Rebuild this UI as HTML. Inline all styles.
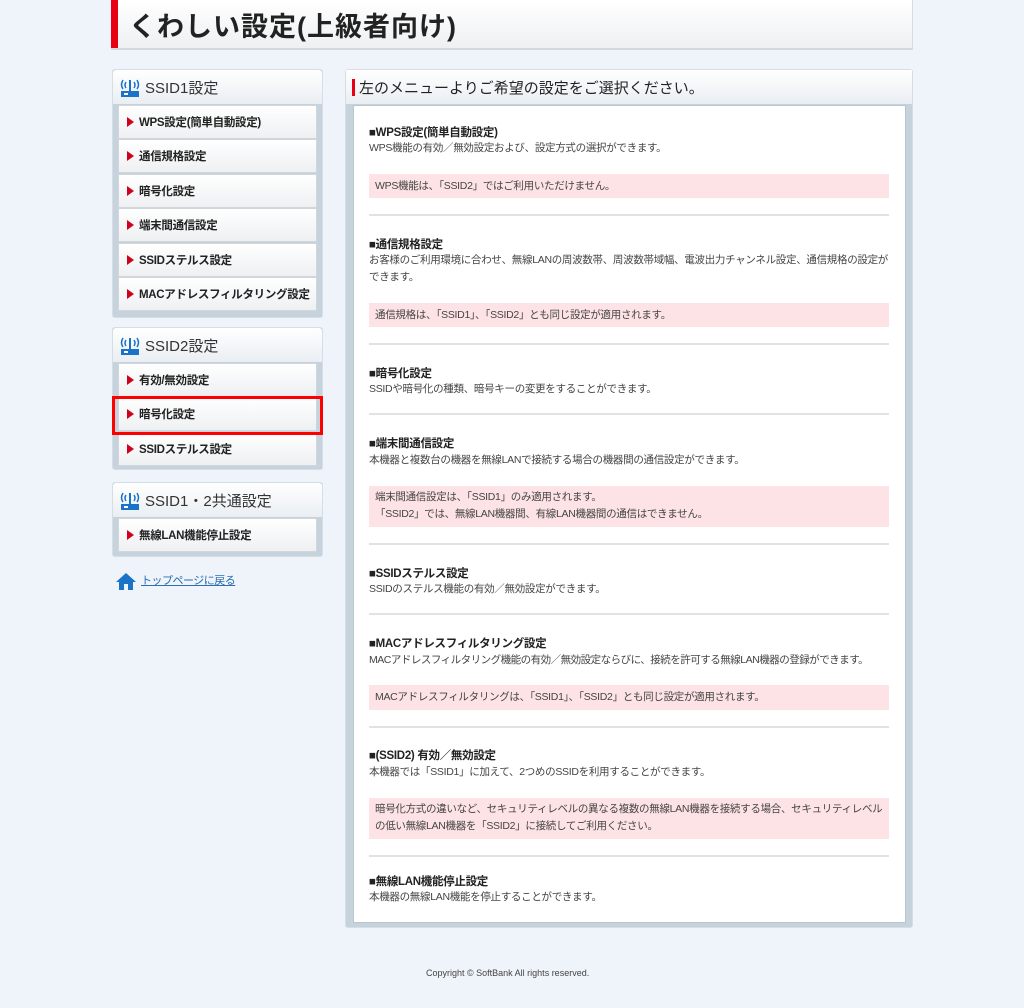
<!DOCTYPE html>
<html><head><meta charset="utf-8"><style>
*{margin:0;padding:0;box-sizing:border-box}
body{width:1024px;height:1008px;background:#eff3fa;font-family:"Liberation Sans","Noto Sans CJK JP",sans-serif;color:#333;position:relative;overflow:hidden}
.a{position:absolute}
.hdr{left:111px;top:0;width:802px;height:50px;background:linear-gradient(#fff,#eef0f2);border-bottom:2px solid #d3d8dd;border-right:1px solid #d8dde2}
.hdr .bar{position:absolute;left:0;top:0;width:7px;height:48px;background:#e60012}
.hdr .t{position:absolute;left:18px;top:5px;font-size:27px;font-weight:bold;color:#222;letter-spacing:1px}
.box{background:#c6d2dc;border:1px solid #d5dde5;border-radius:3px}
.bh{position:absolute;left:0;top:0;right:0;height:34px;background:linear-gradient(#fff,#eaeef2);border-radius:3px 3px 0 0}
.bh span{position:absolute;left:32px;top:7px;font-size:15px;color:#333}
.ico{position:absolute;left:7px;top:7px}
.it{position:absolute;left:5px;width:199px;height:34px;background:linear-gradient(#fff,#eef0f2);border:1px solid #d0d6dc;font-size:11.5px;font-weight:bold;color:#222;padding:8px 0 0 20px;white-space:nowrap;letter-spacing:-0.3px}
.it:before{content:"";position:absolute;left:8px;top:11px;border-left:7px solid #d0021b;border-top:5px solid transparent;border-bottom:5px solid transparent}
.sel{position:absolute;border:3px solid #f00}
.rp{left:345px;top:69px;width:568px;height:859px;background:#c6d2dc;border:1px solid #d5dde5;border-radius:3px}
.rh{position:absolute;left:0;top:0;right:0;height:34px;background:linear-gradient(#fff,#eaeef2)}
.rh .bar{position:absolute;left:6px;top:9px;width:3px;height:17px;background:#e60012}
.rh span{position:absolute;left:13px;top:7px;font-size:15px;color:#222}
.wb{position:absolute;left:7px;top:35px;width:553px;height:818px;background:#fff;border:1px solid #b8c6d2}
.h{position:absolute;left:369px;font-size:11.5px;font-weight:bold;color:#222;letter-spacing:-0.3px}
.d{position:absolute;left:369px;font-size:10.5px;color:#444;line-height:17px;width:522px;letter-spacing:-0.3px}
.n{position:absolute;left:369px;width:520px;background:#fde3e5;font-size:10.5px;color:#444;padding:0 6px;line-height:17px;letter-spacing:-0.3px}
.hr{position:absolute;left:369px;width:520px;height:2px;background:#e2e2e2}
</style></head><body>
<div class="a hdr"><div class="bar"></div><div class="t">くわしい設定(上級者向け)</div></div>

<svg width="0" height="0" style="position:absolute"><defs><g id="w"><path d="M3 3 Q0 8 3 12 M6 5 Q4 8 6 11 M17 3 Q20 8 17 12 M14 5 Q16 8 14 11" stroke="#1a73c9" stroke-width="1.5" fill="none"/><rect x="9" y="3" width="2" height="11" fill="#1a73c9"/><rect x="1" y="14" width="18" height="6" fill="#1a73c9"/><rect x="4" y="16" width="4" height="2" fill="#fff"/></g></defs></svg>

<div class="a box" style="left:112px;top:69px;width:211px;height:249px">
<div class="bh"><svg class="ico" width="20" height="21"><use href="#w"/></svg><span>SSID1設定</span></div>
<div class="it" style="top:35px">WPS設定(簡単自動設定)</div>
<div class="it" style="top:69px">通信規格設定</div>
<div class="it" style="top:104px">暗号化設定</div>
<div class="it" style="top:138px">端末間通信設定</div>
<div class="it" style="top:173px">SSIDステルス設定</div>
<div class="it" style="top:207px">MACアドレスフィルタリング設定</div>
</div>

<div class="a box" style="left:112px;top:327px;width:211px;height:143px">
<div class="bh"><svg class="ico" width="20" height="21"><use href="#w"/></svg><span>SSID2設定</span></div>
<div class="it" style="top:35px">有効/無効設定</div>
<div class="it" style="top:69px">暗号化設定</div>
<div class="it" style="top:104px">SSIDステルス設定</div>
</div>
<div class="sel" style="left:112px;top:396px;width:211px;height:39px"></div>

<div class="a box" style="left:112px;top:482px;width:211px;height:75px">
<div class="bh"><svg class="ico" width="20" height="21"><use href="#w"/></svg><span>SSID1・2共通設定</span></div>
<div class="it" style="top:35px">無線LAN機能停止設定</div>
</div>

<svg class="a" style="left:116px;top:572px" width="20" height="19"><path d="M10 1 L0 10 H3 V18 H8 V12 H12 V18 H17 V10 H20 Z" fill="#1a73c9"/></svg>
<div class="a" style="left:141px;top:572px;font-size:11px;color:#2a6fb5;text-decoration:underline;letter-spacing:-0.5px">トップページに戻る</div>

<div class="a rp"><div class="rh"><div class="bar"></div><span>左のメニューよりご希望の設定をご選択ください。</span></div><div class="wb"></div></div>

<div class="h" style="top:124px">■WPS設定(簡単自動設定)</div>
<div class="d" style="top:140px">WPS機能の有効／無効設定および、設定方式の選択ができます。</div>
<div class="n" style="top:174px;height:24px;padding-top:4px">WPS機能は、「SSID2」ではご利用いただけません。</div>
<div class="hr" style="top:214px"></div>

<div class="h" style="top:236px">■通信規格設定</div>
<div class="d" style="top:252px">お客様のご利用環境に合わせ、無線LANの周波数帯、周波数帯域幅、電波出力チャンネル設定、通信規格の設定ができます。</div>
<div class="n" style="top:303px;height:24px;padding-top:4px">通信規格は、「SSID1」、「SSID2」とも同じ設定が適用されます。</div>
<div class="hr" style="top:343px"></div>

<div class="h" style="top:365px">■暗号化設定</div>
<div class="d" style="top:381px">SSIDや暗号化の種類、暗号キーの変更をすることができます。</div>
<div class="hr" style="top:413px"></div>

<div class="h" style="top:435px">■端末間通信設定</div>
<div class="d" style="top:452px">本機器と複数台の機器を無線LANで接続する場合の機器間の通信設定ができます。</div>
<div class="n" style="top:486px;height:41px;padding-top:3px">端末間通信設定は、「SSID1」のみ適用されます。<br>「SSID2」では、無線LAN機器間、有線LAN機器間の通信はできません。</div>
<div class="hr" style="top:543px"></div>

<div class="h" style="top:565px">■SSIDステルス設定</div>
<div class="d" style="top:581px">SSIDのステルス機能の有効／無効設定ができます。</div>
<div class="hr" style="top:613px"></div>

<div class="h" style="top:635px">■MACアドレスフィルタリング設定</div>
<div class="d" style="top:652px;white-space:nowrap;letter-spacing:-0.5px">MACアドレスフィルタリング機能の有効／無効設定ならびに、接続を許可する無線LAN機器の登録ができます。</div>
<div class="n" style="top:685px;height:25px;padding-top:4px">MACアドレスフィルタリングは、「SSID1」、「SSID2」とも同じ設定が適用されます。</div>
<div class="hr" style="top:726px"></div>

<div class="h" style="top:747px">■(SSID2) 有効／無効設定</div>
<div class="d" style="top:764px">本機器では「SSID1」に加えて、2つめのSSIDを利用することができます。</div>
<div class="n" style="top:798px;height:41px;padding-top:3px">暗号化方式の違いなど、セキュリティレベルの異なる複数の無線LAN機器を接続する場合、セキュリティレベルの低い無線LAN機器を「SSID2」に接続してご利用ください。</div>
<div class="hr" style="top:855px"></div>

<div class="h" style="top:873px">■無線LAN機能停止設定</div>
<div class="d" style="top:889px">本機器の無線LAN機能を停止することができます。</div>

<div class="a" style="left:426px;top:968px;font-size:9px;color:#444">Copyright © SoftBank All rights reserved.</div>
</body></html>
